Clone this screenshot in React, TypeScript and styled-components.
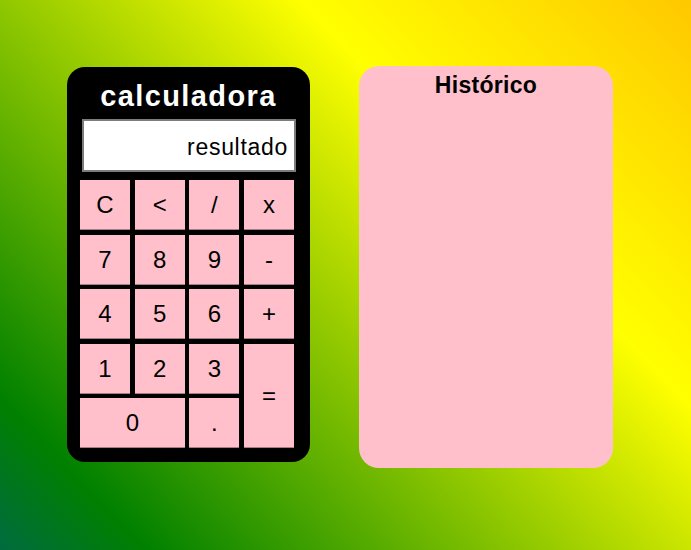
import React from "react";
import styled, { createGlobalStyle } from "styled-components";

const GlobalStyle = createGlobalStyle`
  html, body {
    margin: 0;
    padding: 0;
    min-height: 100%;
  }
  body {
    min-height: 550px;
    font-family: "Liberation Sans", Arial, sans-serif;
    background: linear-gradient(46deg, #006b3f 0%, #008000 12%, #ffff00 68%, #ffc800 100%);
    background-attachment: fixed;
  }
`;

const Page = styled.div`
  display: flex;
  align-items: flex-start;
  gap: 49px;
  padding: 66px 0 0 67px;
  min-height: 550px;
  box-sizing: border-box;
`;

const Calculator = styled.div`
  margin-top: 1px;
  width: 243px;
  box-sizing: border-box;
  background: #000;
  border-radius: 18px;
  padding: 14px 16px 14px 13px;
  display: flex;
  flex-direction: column;
`;

const Title = styled.h1`
  margin: 0;
  color: #fff;
  font-size: 29px;
  line-height: 30px;
  font-weight: 700;
  letter-spacing: 1.4px;
  text-align: center;
  padding-left: 3px;
`;

const Display = styled.div`
  margin: 8px 0 0 2px;
  width: 214px;
  height: 53px;
  box-sizing: border-box;
  background: #fff;
  border: 2px solid #7c7c7c;
  display: flex;
  align-items: center;
  justify-content: flex-end;
  padding: 3px 6px 0 0;
  font-size: 23px;
  letter-spacing: 0.7px;
  color: #000;
`;

const Keys = styled.div`
  margin-top: 8px;
  display: grid;
  grid-template-columns: repeat(4, 50px);
  grid-auto-rows: 50px;
  column-gap: 4.67px;
  row-gap: 4.5px;
`;

const Key = styled.button<{ $cols?: number; $rows?: number }>`
  grid-column: span ${(p) => p.$cols ?? 1};
  grid-row: span ${(p) => p.$rows ?? 1};
  margin: 0;
  padding: 0;
  border: none;
  background: #ffc0cb;
  box-shadow: inset 0 -1px 0 rgba(0, 0, 0, 0.35);
  color: #000;
  font-family: "Liberation Sans", Arial, sans-serif;
  font-size: 24px;
  cursor: pointer;
`;

const History = styled.div`
  width: 254px;
  height: 402px;
  box-sizing: border-box;
  background: #ffc0cb;
  border-radius: 20px;
  padding-top: 6px;
`;

const HistoryTitle = styled.h2`
  margin: 0;
  text-align: center;
  font-size: 23px;
  line-height: 26px;
  font-weight: 700;
  letter-spacing: 0.3px;
  color: #000;
`;

type K = { label: string; cols?: number; rows?: number };

const keys: K[] = [
  { label: "C" }, { label: "<" }, { label: "/" }, { label: "x" },
  { label: "7" }, { label: "8" }, { label: "9" }, { label: "-" },
  { label: "4" }, { label: "5" }, { label: "6" }, { label: "+" },
  { label: "1" }, { label: "2" }, { label: "3" }, { label: "=", rows: 2 },
  { label: "0", cols: 2 }, { label: "." },
];

export default function App() {
  return (
    <>
      <GlobalStyle />
      <Page>
        <Calculator>
          <Title>calculadora</Title>
          <Display>resultado</Display>
          <Keys>
            {keys.map((k) => (
              <Key key={k.label} $cols={k.cols} $rows={k.rows}>
                {k.label}
              </Key>
            ))}
          </Keys>
        </Calculator>
        <History>
          <HistoryTitle>Histórico</HistoryTitle>
        </History>
      </Page>
    </>
  );
}
